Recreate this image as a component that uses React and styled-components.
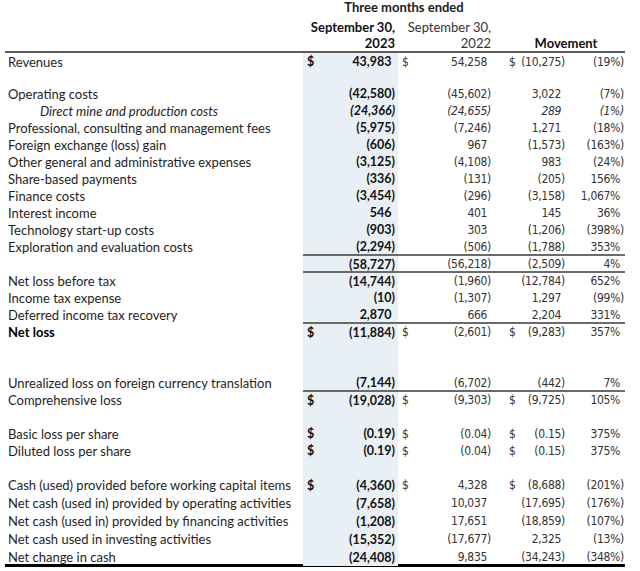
import styled, { createGlobalStyle } from "styled-components";

const GlobalStyle = createGlobalStyle`
  html, body {
    margin: 0;
    padding: 0;
    background: #fff;
  }
  body {
    font-family: Lato, "Liberation Sans", sans-serif;
    color: #1c1c1c;
  }
`;

const COLS = "298px 95px 97px 75px 55px";
const SHADE = "#e9f0f5";

const Table = styled.div`
  margin-left: 5px;
  width: 620px;
`;

const Head = styled.div`
  display: grid;
  grid-template-columns: ${COLS};
  border-bottom: 2px solid #5c5c5c;
  font-size: 13px;
`;

const HeadTitle = styled.div`
  grid-column: 2 / 4;
  text-align: center;
  font-weight: 700;
  line-height: 15px;
  height: 16px;
  padding-left: 10px;
`;

const HeadCell = styled.div`
  grid-column: ${(p) => p.$col};
  text-align: ${(p) => p.$align || "right"};
  font-weight: ${(p) => (p.$bold ? 700 : 400)};
  line-height: 16px;
  padding-top: 3px;
  padding-right: ${(p) => p.$pr || 0}px;
  padding-left: ${(p) => p.$pl || 0}px;
  color: ${(p) => (p.$bold ? "#111" : "#333")};
  white-space: pre-line;
  align-self: end;
`;

const Row = styled.div`
  display: grid;
  grid-template-columns: ${COLS};
  height: ${(p) => p.$h || 17}px;
  font-size: 13px;
`;

const Label = styled.div`
  display: flex;
  align-items: center;
  padding-left: ${(p) => (p.$indent ? 35 : 3)}px;
  font-style: ${(p) => (p.$italic ? "italic" : "normal")};
  font-weight: ${(p) => (p.$bold ? 700 : 400)};
  color: ${(p) => (p.$bold ? "#000" : "#1e1e1e")};
  white-space: nowrap;
`;

const Money = styled.div`
  display: flex;
  align-items: center;
  justify-content: space-between;
  padding: 0 ${(p) => p.$pr}px 0 ${(p) => p.$pl}px;
  background: ${(p) => (p.$shade ? SHADE : "transparent")};
  border-top: ${(p) => (p.$rule ? "2px solid #6a6a6a" : "none")};
  margin-top: ${(p) => (p.$rule ? "-1px" : 0)};
  font-family: ${(p) =>
    p.$strong
      ? 'Lato, "Liberation Sans", sans-serif'
      : '"DejaVu Sans Condensed", "DejaVu Sans", sans-serif'};
  font-size: ${(p) => (p.$strong ? 12.5 : 12)}px;
  letter-spacing: ${(p) => (p.$strong ? 0 : -0.3)}px;
  font-weight: ${(p) => (p.$strong ? 700 : 400)};
  font-style: ${(p) => (p.$italic ? "italic" : "normal")};
  color: ${(p) => (p.$strong ? "#111" : "#333")};
  white-space: nowrap;
`;

const Hang = styled.span`
  visibility: hidden;
`;

const BottomRule = styled.div`
  height: 3px;
  background: #000;
  margin-top: -2px;
`;

function Num({ v }) {
  if (!v) return <span />;
  const open = v.endsWith(")");
  return (
    <span>
      {v}
      {!open && <Hang>)</Hang>}
    </span>
  );
}

const rows = [
  { label: "Revenues", a: "43,983", b: "54,258", c: "(10,275)", d: "(19%)", da: true, db: true, dc: true },
  { gap: 15 },
  { label: "Operating costs", a: "(42,580)", b: "(45,602)", c: "3,022", d: "(7%)" },
  { label: "Direct mine and production costs", a: "(24,366)", b: "(24,655)", c: "289", d: "(1%)", italic: true, indent: true },
  { label: "Professional, consulting and management fees", a: "(5,975)", b: "(7,246)", c: "1,271", d: "(18%)" },
  { label: "Foreign exchange (loss) gain", a: "(606)", b: "967", c: "(1,573)", d: "(163%)" },
  { label: "Other general and administrative expenses", a: "(3,125)", b: "(4,108)", c: "983", d: "(24%)" },
  { label: "Share-based payments", a: "(336)", b: "(131)", c: "(205)", d: "156%" },
  { label: "Finance costs", a: "(3,454)", b: "(296)", c: "(3,158)", d: "1,067%" },
  { label: "Interest income", a: "546", b: "401", c: "145", d: "36%" },
  { label: "Technology start-up costs", a: "(903)", b: "303", c: "(1,206)", d: "(398%)" },
  { label: "Exploration and evaluation costs", a: "(2,294)", b: "(506)", c: "(1,788)", d: "353%" },
  { label: "", a: "(58,727)", b: "(56,218)", c: "(2,509)", d: "4%", rule: true },
  { label: "Net loss before tax", a: "(14,744)", b: "(1,960)", c: "(12,784)", d: "652%", rule: true },
  { label: "Income tax expense", a: "(10)", b: "(1,307)", c: "1,297", d: "(99%)" },
  { label: "Deferred income tax recovery", a: "2,870", b: "666", c: "2,204", d: "331%" },
  { label: "Net loss", bold: true, a: "(11,884)", b: "(2,601)", c: "(9,283)", d: "357%", rule: true, da: true, db: true, dc: true },
  { gap: 17 },
  { gap: 17 },
  { label: "Unrealized loss on foreign currency translation", a: "(7,144)", b: "(6,702)", c: "(442)", d: "7%" },
  { label: "Comprehensive loss", a: "(19,028)", b: "(9,303)", c: "(9,725)", d: "105%", rule: true, da: true, db: true, dc: true },
  { gap: 17 },
  { label: "Basic loss per share", a: "(0.19)", b: "(0.04)", c: "(0.15)", d: "375%", da: true, db: true, dc: true },
  { label: "Diluted loss per share", a: "(0.19)", b: "(0.04)", c: "(0.15)", d: "375%", da: true, db: true, dc: true },
  { gap: 17 },
  { h: 18, label: "Cash (used) provided before working capital items", a: "(4,360)", b: "4,328", c: "(8,688)", d: "(201%)", da: true, db: true, dc: true },
  { h: 18, label: "Net cash (used in) provided by operating activities", a: "(7,658)", b: "10,037", c: "(17,695)", d: "(176%)" },
  { h: 18, label: "Net cash (used in) provided by financing activities", a: "(1,208)", b: "17,651", c: "(18,859)", d: "(107%)" },
  { h: 18, label: "Net cash used in investing activities", a: "(15,352)", b: "(17,677)", c: "2,325", d: "(13%)" },
  { h: 18, label: "Net change in cash", a: "(24,408)", b: "9,835", c: "(34,243)", d: "(348%)" },
];

function Line({ r }) {
  if (r.gap) {
    return (
      <Row $h={r.gap}>
        <Label />
        <Money $shade $pl={4} $pr={3} />
        <span />
        <span />
        <span />
      </Row>
    );
  }
  return (
    <Row $h={r.h}>
      <Label $italic={r.italic} $indent={r.indent} $bold={r.bold}>
        {r.label}
      </Label>
      <Money $shade $strong $italic={r.italic} $rule={r.rule} $pl={4} $pr={3}>
        <span>{r.da ? "$" : ""}</span>
        <Num v={r.a} />
      </Money>
      <Money $italic={r.italic} $rule={r.rule} $pl={4} $pr={4}>
        <span>{r.db ? "$" : ""}</span>
        <Num v={r.b} />
      </Money>
      <Money $italic={r.italic} $rule={r.rule} $pl={14} $pr={5}>
        <span>{r.dc ? "$" : ""}</span>
        <Num v={r.c} />
      </Money>
      <Money $italic={r.italic} $rule={r.rule} $pl={0} $pr={1}>
        <span />
        <Num v={r.d} />
      </Money>
    </Row>
  );
}

export default function App() {
  return (
    <>
      <GlobalStyle />
      <Table>
        <Head>
          <HeadTitle>Three months ended</HeadTitle>
          <span />
          <HeadCell $col="2" $bold $pr={3}>
            {"September 30,\n2023"}
          </HeadCell>
          <HeadCell $col="3" $pr={4}>
            {"September 30,\n2022"}
          </HeadCell>
          <HeadCell $col="4 / 6" $bold $align="center" $pl={12}>
            Movement
          </HeadCell>
        </Head>
        {rows.map((r, i) => (
          <Line key={i} r={r} />
        ))}
        <BottomRule />
      </Table>
    </>
  );
}
